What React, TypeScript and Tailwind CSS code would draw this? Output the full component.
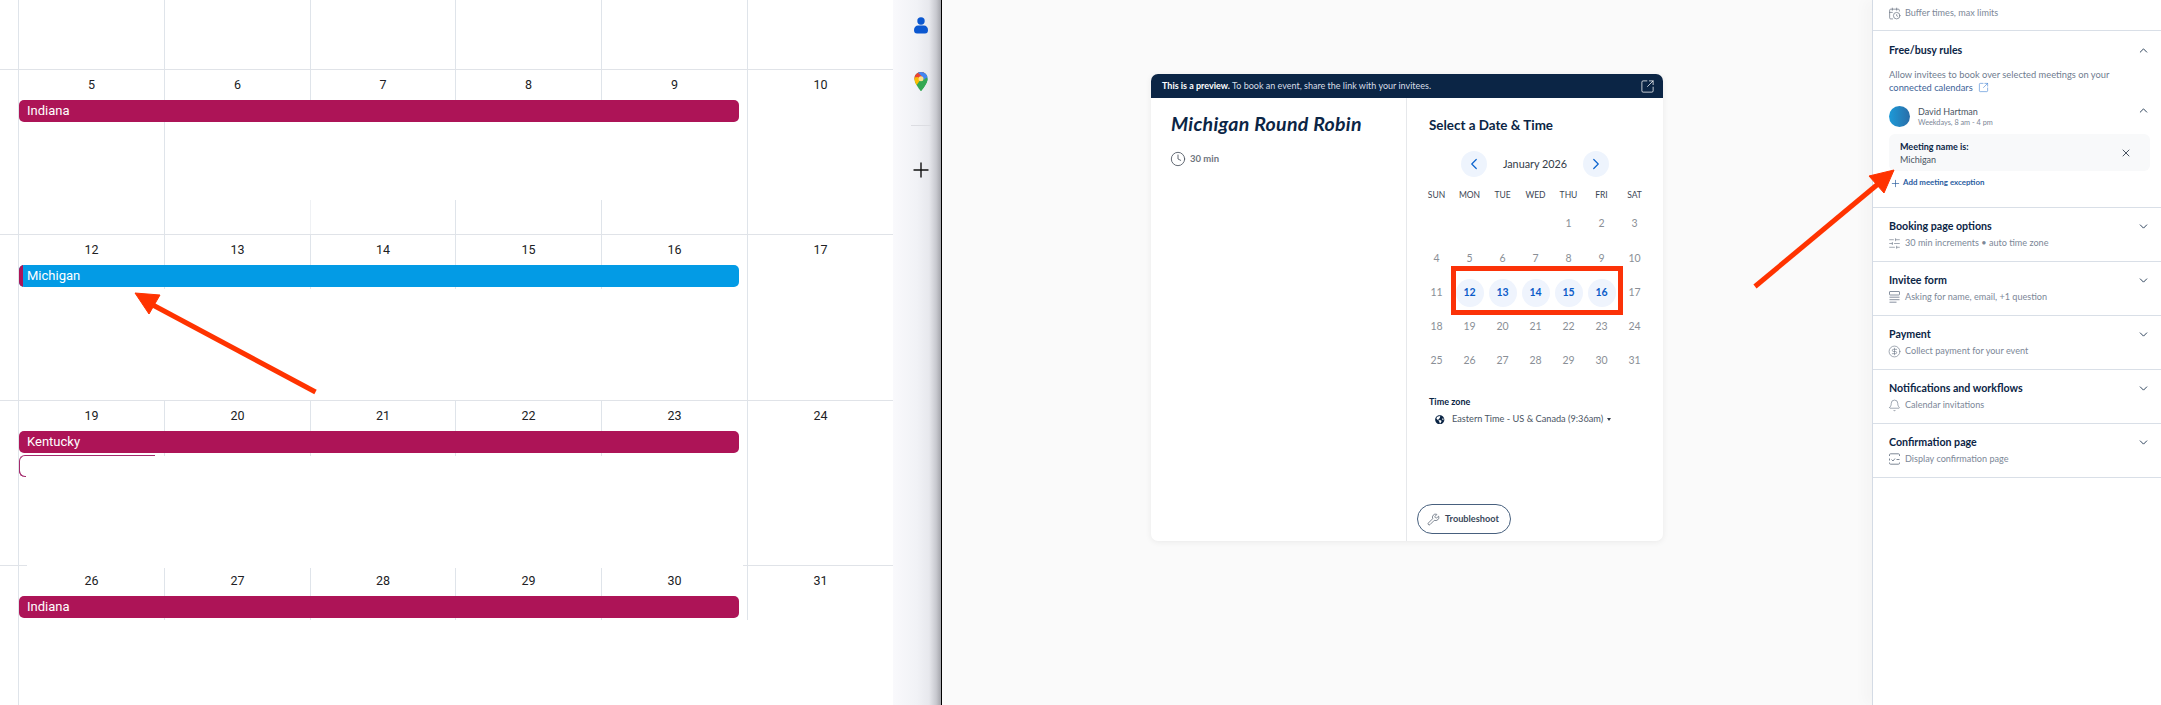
import React from "react";
import {
  ChevronDown, ChevronLeft, ChevronRight, ChevronUp, CircleDollarSign, Bell, Clock, Plus, SlidersHorizontal, SquareArrowOutUpRight, Wrench, X, CalendarClock,
} from "lucide-react";
import { FaGlobeAmericas } from "react-icons/fa";

const WIDTHS = ["w-[146px]", "w-[146px]", "w-[145px]", "w-[146px]", "w-[146px]"];

function Rule({ gap = false }: { gap?: boolean }) {
  if (gap) {
    return (
      <div className="flex h-px w-full shrink-0">
        <div className="w-[27px] bg-[#e0e3e8]" />
        <div className="w-[716px]" />
        <div className="flex-1 bg-[#e0e3e8]" />
      </div>
    );
  }
  return <div className="h-px w-full shrink-0 bg-[#e0e3e8]" />;
}

type RowProps = {
  dates: string[];
  sat: string;
  bar: React.ReactNode;
  topCls?: string[];
  lines: string[];
  satCls: string;
  outline?: boolean;
  rowCls: string;
};

const TOP = "h-full pt-[6px]";

function WeekRow({ dates, sat, bar, topCls, lines, satCls, outline, rowCls }: RowProps) {
  return (
    <div className={`flex ${rowCls}`}>
      <div className="w-[18px] shrink-0" />
      <div className="flex w-[729px] shrink-0 flex-col">
        <div className="flex h-[30px] shrink-0">
          {dates.map((d, i) => (
            <div key={d} className={WIDTHS[i]}>
              <div className={`border-l border-[#dfe4ea] text-center text-[12.5px] leading-[18px] text-[#202124] ${topCls ? topCls[i] : TOP}`}>{d}</div>
            </div>
          ))}
        </div>
        <div className="h-[22px] shrink-0 border-l border-[#dfe4ea]">{bar}</div>
        <div className="relative flex min-h-0 flex-1">
          {lines.map((c, i) => (
            <div key={i} className={`${WIDTHS[i]} flex`}>
              <div className={`border-l border-[#dfe4ea] ${c}`} />
            </div>
          ))}
          {outline && (
            <div className="absolute left-px top-[2px] flex h-[22px] w-[136px] rounded-l-[6px] border-l border-t border-[#a32a6c]">
              <div className="mt-auto h-[6px] w-[7px] translate-x-[-1px] rounded-bl-[6px] border-b border-l border-[#a32a6c]" />
            </div>
          )}
        </div>
      </div>
      <div className="w-[146px]">
        <div className={`border-l border-[#dfe4ea] pt-[6px] text-center text-[12.5px] leading-[18px] text-[#202124] ${satCls}`}>{sat}</div>
      </div>
    </div>
  );
}

function Bar({ label, color, stripe }: { label: string; color: string; stripe?: boolean }) {
  return (
    <div className={`flex h-[22px] w-[720px] items-center overflow-hidden rounded-[5px] text-[13px] text-white ${color}`}>
      {stripe ? <div className="h-full w-[4px] shrink-0 bg-[#ad1457]" /> : null}
      <span className={stripe ? "pl-[4px]" : "pl-[8px]"}>{label}</span>
    </div>
  );
}

function Calendar() {
  return (
    <div className="flex h-full w-[893px] shrink-0 flex-col bg-white font-['Roboto',sans-serif]">
      <div className="flex h-[69px] shrink-0">
        <div className="w-[18px]" />
        {WIDTHS.map((w, i) => (
          <div key={i} className={`${w} border-l border-[#dfe4ea]`} />
        ))}
        <div className="w-[146px] border-l border-[#dfe4ea]" />
      </div>
      <Rule />
      <WeekRow
        rowCls="h-[164px] shrink-0"
        dates={["5", "6", "7", "8", "9"]}
        sat="10"
        satCls="h-[164px]"
        bar={<Bar label="Indiana" color="bg-[#ad1457]" />}
        lines={["h-full", "h-full", "mt-[78px] h-[34px] opacity-50", "mt-[78px] h-[34px]", "mt-[78px] h-[34px]"]}
      />
      <Rule />
      <WeekRow
        rowCls="h-[165px] shrink-0"
        dates={["12", "13", "14", "15", "16"]}
        sat="17"
        satCls="h-[165px]"
        bar={<Bar label="Michigan" color="bg-[#039be5]" stripe />}
        lines={["h-full", "h-[2px]", "h-[2px]", "h-[2px]", "h-[2px]"]}
      />
      <Rule />
      <WeekRow
        rowCls="h-[164px] shrink-0"
        dates={["19", "20", "21", "22", "23"]}
        sat="24"
        satCls="h-[164px]"
        outline
        bar={<Bar label="Kentucky" color="bg-[#ad1457]" />}
        lines={["h-full", "h-[3px]", "h-[3px]", "h-[3px]", "h-[3px]"]}
      />
      <Rule gap />
      <WeekRow
        rowCls="flex-1 min-h-0"
        dates={["26", "27", "28", "29", "30"]}
        sat="31"
        satCls="h-[54px]"
        topCls={[TOP, "mt-[2px] h-[28px] pt-[4px]", "mt-[2px] h-[28px] pt-[4px]", "mt-[2px] h-[28px] pt-[4px]", "mt-[2px] h-[28px] pt-[4px]"]}
        bar={<Bar label="Indiana" color="bg-[#ad1457]" />}
        lines={["h-full", "h-[2px]", "h-[2px]", "h-[2px]", "h-[2px]"]}
      />
    </div>
  );
}

function MapsPin() {
  return (
    <svg width="14" height="19" viewBox="0 0 24 34">
      <defs>
        <clipPath id="pinClip">
          <path d="M12 0C5.4 0 0 5.4 0 12c0 8.5 12 22 12 22s12-13.5 12-22C24 5.4 18.6 0 12 0z" />
        </clipPath>
      </defs>
      <g clipPath="url(#pinClip)">
        <rect width="24" height="34" fill="#34a853" />
        <path d="M-2 14h10l5 -4 13 -12h-28z" fill="#ea4335" />
        <path d="M3 -2h23v16l-6 4 -6 -10z" fill="#4285f4" />
        <path d="M-2 10l9 -1 3 6 -7 10 -5 -6z" fill="#fbbc04" />
        <path d="M14 17l8 -7 4 4 -14 22 -5 -6z" fill="#34a853" />
        <circle cx="12" cy="12" r="4.5" fill="#fbe08a" />
      </g>
    </svg>
  );
}

function Sidebar() {
  return (
    <div className="flex h-full w-[49px] shrink-0 flex-col items-start border-r border-black bg-[linear-gradient(90deg,#f9f9fc_0%,#f1f2f6_50%,#e7e8ed_75%,#c8c9cf_90%,#a4a5ab_100%)] pl-[21px]">
      <svg className="mt-[17px]" width="14" height="17" viewBox="0 0 14 17" fill="#0b57d0">
        <circle cx="7" cy="4" r="3.7" />
        <path d="M0 13c0-3 2-4.5 4-4.5h6c2 0 4 1.5 4 4.5 0 2.5-1 3.5-3 3.5H3c-2 0-3-1-3-3.5z" />
      </svg>
      <div className="mt-[38px]">
        <MapsPin />
      </div>
      <div className="ml-[-3px] mt-[34px] h-px w-[21px] bg-[#dcdde2]" />
      <Plus className="ml-[-5px] mt-[32px] shrink-0 text-[#111]" size={24} strokeWidth={1.4} />
    </div>
  );
}

const CAL: (string | null)[][] = [
  [null, null, null, null, "1", "2", "3"],
  ["4", "5", "6", "7", "8", "9", "10"],
  ["11", "12", "13", "14", "15", "16", "17"],
  ["18", "19", "20", "21", "22", "23", "24"],
  ["25", "26", "27", "28", "29", "30", "31"],
];

function Booking() {
  const active = new Set(["12", "13", "14", "15", "16"]);
  return (
    <div className="flex-1 bg-[#fafafa] pl-[209px] pt-[74px] font-['Lato',sans-serif]">
      <div className="flex h-[467px] w-[512px] flex-col overflow-hidden rounded-[7px] bg-white shadow-[0_1px_6px_rgba(0,0,0,0.07)]">
        <div className="flex h-[24px] shrink-0 items-center justify-between bg-[#0b2545] pl-[11px] pr-[8px] text-[9px] text-[#d7dee7]">
          <span>
            <b className="font-bold text-white">This is a preview.</b> To book an event, share the link with your invitees.
          </span>
          <SquareArrowOutUpRight size={15} strokeWidth={1.2} className="text-white" />
        </div>
        <div className="flex min-h-0 flex-1">
          <div className="w-[256px] shrink-0 border-r border-[#e6e8eb] pl-[20px] pt-[16px]">
            <div className="h-[20px] text-[19.5px] font-bold italic leading-[20px] tracking-[0.3px] text-[#0b2545]">Michigan Round Robin</div>
            <div className="ml-[-1px] mt-[17px] flex items-center gap-[4px] text-[9.5px] font-bold text-[#6f7680]">
              <Clock size={16} strokeWidth={1.3} className="text-[#4d5560]" />
              <span>30 min</span>
            </div>
          </div>
          <div className="flex flex-1 flex-col pl-[13px]">
            <div className="ml-[9px] mt-[17px] h-[20px] text-[13.4px] font-bold leading-[20px] text-[#0b2545]">Select a Date &amp; Time</div>
            <div className="mt-[16px] flex h-[26px] w-[189px] items-center justify-between pl-[41px]">
              <div className="flex h-[26px] w-[26px] items-center justify-center rounded-full bg-[#eef4fd] text-[#0b63ce]">
                <ChevronLeft size={18} strokeWidth={1.6} />
              </div>
              <span className="text-[10.8px] text-[#333c48]">January 2026</span>
              <div className="flex h-[26px] w-[26px] items-center justify-center rounded-full bg-[#eef4fd] text-[#0b63ce]">
                <ChevronRight size={18} strokeWidth={1.6} />
              </div>
            </div>
            <div className="mt-[12px] grid h-[12px] grid-cols-[repeat(7,33px)] text-center text-[8.5px] leading-[12px] text-[#3c4654]">
              {["SUN", "MON", "TUE", "WED", "THU", "FRI", "SAT"].map((d) => (
                <div key={d}>{d}</div>
              ))}
            </div>
            <div className="mt-[6px] grid auto-rows-[34.25px] grid-cols-[repeat(7,33px)] text-center text-[10.5px] text-[#8a8f96]">
              {CAL.flat().map((d, i) =>
                d && active.has(d) ? (
                  <div key={i} className="flex items-center justify-center">
                    <div className="flex h-[28px] w-[28px] items-center justify-center rounded-full bg-[#eff4fd] font-bold text-[#0b5cc9]">{d}</div>
                  </div>
                ) : (
                  <div key={i} className="flex items-center justify-center">
                    {d}
                  </div>
                ),
              )}
            </div>
            <div className="ml-[9px] mt-[17px] h-[14px] text-[9px] font-bold leading-[14px] text-[#0b2545]">Time zone</div>
            <div className="ml-[15px] mt-[3px] flex h-[14px] items-center text-[9.2px] text-[#4a5563]">
              <FaGlobeAmericas size={9.5} className="text-[#0b2545]" />
              <span className="ml-[7.5px]">Eastern Time - US &amp; Canada (9:36am)</span>
              <span className="ml-[4px] h-0 w-0 border-x-[2.5px] border-t-[3px] border-x-transparent border-t-[#333c48]" />
            </div>
            <div className="mb-[7px] ml-[-3px] mt-auto flex h-[30px] w-[94px] items-center rounded-full border border-[#47607e] pl-[9px] text-[9.2px] font-bold text-[#39475a]">
              <Wrench size={13} strokeWidth={1.2} />
              <span className="ml-[5px]">Troubleshoot</span>
            </div>
          </div>
        </div>
      </div>
    </div>
  );
}

function FormIcon() {
  return (
    <svg width="11" height="12" viewBox="0 0 11 12" fill="none" stroke="#7b8696" strokeWidth="0.9">
      <rect x="0.5" y="0.5" width="10" height="3.5" rx="0.5" />
      <path d="M0.5 6.2h10M0.5 8.7h10M0.5 11.2h7" />
    </svg>
  );
}

function ConfirmIcon() {
  return (
    <svg width="11" height="12" viewBox="0 0 11 12" fill="none" stroke="#6f7a8a" strokeWidth="0.9">
      <path d="M10.5 3V1.8a1 1 0 0 0-1-1H1.5a1 1 0 0 0-1 1v1.2M0.5 5.5v2M0.5 9.5v.7a1 1 0 0 0 1 1h8a1 1 0 0 0 1-1V9.5" />
      <path d="M2.5 6.5l1.5 1.5 2-2.5M7.5 6.5h3" />
    </svg>
  );
}

function Section({ title, sub, icon }: { title: string; sub: string; icon: React.ReactNode }) {
  return (
    <div className="h-[54px] shrink-0 border-b border-[#d9dfe7] pl-[16px] pr-[11px] pt-[11px]">
      <div className="flex h-[14px] items-center justify-between">
        <span className="text-[10.65px] font-bold text-[#0b2545]">{title}</span>
        <ChevronDown size={13} strokeWidth={1.7} className="text-[#1f3550]" />
      </div>
      <div className="mt-[3px] flex h-[14px] items-center text-[9.1px] text-[#7d8898]">
        <div className="flex w-[16px] shrink-0 items-center">{icon}</div>
        <span>{sub}</span>
      </div>
    </div>
  );
}

function Settings() {
  return (
    <div className="flex h-full w-[289px] shrink-0 flex-col border-l border-[#d4dbe5] bg-white font-['Lato',sans-serif] shadow-[-8px_0_12px_rgba(0,0,0,0.025)]">
      <div className="flex h-[31px] shrink-0 items-start border-b border-[#d9dfe7] pl-[16px] pt-[6px] text-[9.1px] text-[#7d8898]">
        <div className="flex h-[14px] w-[16px] items-center">
          <CalendarClock size={13} strokeWidth={1.2} className="ml-[-1px] text-[#5b6676]" />
        </div>
        <span className="leading-[14px]">Buffer times, max limits</span>
      </div>
      <div className="h-[177px] shrink-0 border-b border-[#d9dfe7] pl-[16px] pr-[11px] pt-[12px]">
        <div className="flex h-[14px] items-center justify-between">
          <span className="text-[10.65px] font-bold text-[#0b2545]">Free/busy rules</span>
          <ChevronUp size={13} strokeWidth={1.7} className="text-[#1f3550]" />
        </div>
        <p className="mt-[11px] text-[9.3px] leading-[13px] text-[#6f7c8f]">
          Allow invitees to book over selected meetings on your
          <br />
          <span className="inline-flex items-center text-[#3d6398]">
            connected calendars
            <SquareArrowOutUpRight size={11} strokeWidth={1.2} className="ml-[5px] text-[#2f76cf]" />
          </span>
        </p>
        <div className="mt-[12px] flex h-[22px] items-start">
          <div className="h-[21px] w-[21px] rounded-full bg-[linear-gradient(90deg,#1c9ad8,#2a6ea8)]" />
          <div className="ml-[8px] flex-1">
            <div className="text-[9px] leading-[11px] text-[#4a5462]">David Hartman</div>
            <div className="text-[7.3px] leading-[11px] text-[#7d8898]">Weekdays, 8 am - 4 pm</div>
          </div>
          <ChevronUp size={13} strokeWidth={1.7} className="mt-[-2px] text-[#1f3550]" />
        </div>
        <div className="mt-[6px] flex h-[37px] items-center justify-between rounded-[6px] bg-[#f8f9fa] pl-[11px] pr-[18px]">
          <div className="text-[9px] leading-[13px]">
            <div className="font-bold text-[#0b2545]">Meeting name is:</div>
            <div className="text-[#4a5462]">Michigan</div>
          </div>
          <X size={12} strokeWidth={1.6} className="text-[#1c2a3a]" />
        </div>
        <div className="mt-[6px] flex h-[12px] items-center pl-px text-[7.9px] font-bold text-[#2a5d9f]">
          <Plus size={11} strokeWidth={1.5} />
          <span className="ml-[2px]">Add meeting exception</span>
        </div>
      </div>
      <Section title="Booking page options" sub="30 min increments • auto time zone" icon={<SlidersHorizontal size={13} strokeWidth={1.2} className="ml-[-1px] text-[#6f7a8a]" />} />
      <Section title="Invitee form" sub="Asking for name, email, +1 question" icon={<FormIcon />} />
      <Section title="Payment" sub="Collect payment for your event" icon={<CircleDollarSign size={13} strokeWidth={1.2} className="ml-[-1px] text-[#6f7a8a]" />} />
      <Section title="Notifications and workflows" sub="Calendar invitations" icon={<Bell size={13} strokeWidth={1.2} className="ml-[-1px] text-[#6f7a8a]" />} />
      <Section title="Confirmation page" sub="Display confirmation page" icon={<ConfirmIcon />} />
    </div>
  );
}

export default function App() {
  return (
    <div className="relative flex h-[705px] w-[2161px] overflow-hidden bg-white">
      <Calendar />
      <Sidebar />
      <Booking />
      <Settings />
      <svg className="pointer-events-none absolute left-0 top-0" width="2161" height="705" viewBox="0 0 2161 705">
        <g fill="#ff3300" stroke="#ff3300">
          <polygon points="135,293 160,295 149,314" strokeWidth="1" />
          <line x1="315.5" y1="392" x2="151" y2="304" strokeWidth="5" />
          <polygon points="1894,170 1869,176 1884,193" strokeWidth="1" />
          <line x1="1755" y1="286.5" x2="1878" y2="184" strokeWidth="5" />
        </g>
      </svg>
      <div className="pointer-events-none absolute left-[1451px] top-[266px] h-[49px] w-[172px] border-[5px] border-[#fb3208]" />
    </div>
  );
}
